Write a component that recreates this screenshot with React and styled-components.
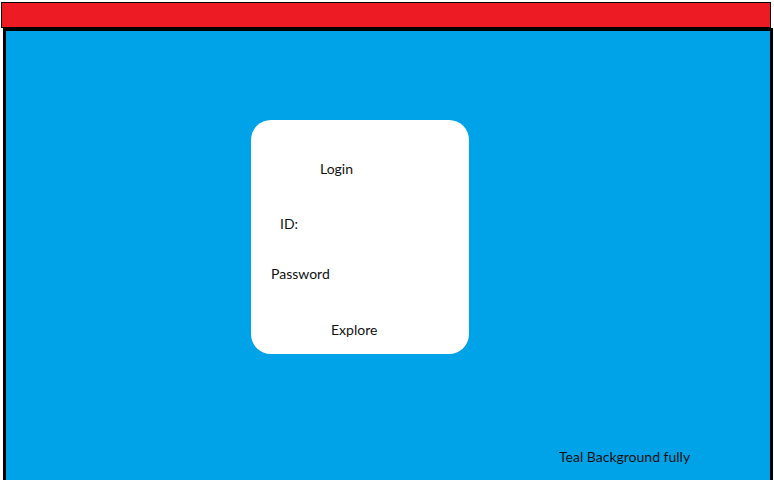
import React from "react";
import styled, { createGlobalStyle } from "styled-components";

const GlobalStyle = createGlobalStyle`
  html, body {
    margin: 0;
    padding: 0;
    background: #ffffff;
    overflow: hidden;
  }
  body {
    font-family: Lato, "Open Sans", sans-serif;
  }
`;

const Page = styled.div`
  width: 774px;
  height: 480px;
  padding-top: 2px;
  box-sizing: border-box;
`;

const TopBar = styled.header`
  width: 770px;
  height: 26px;
  margin-left: 1px;
  box-sizing: border-box;
  border: 1px solid #000;
  background: #ed1c24;
`;

const Main = styled.main`
  width: 770px;
  height: 470px;
  margin-left: 3px;
  box-sizing: border-box;
  border: 3px solid #000;
  border-bottom: none;
  background: #00a2e8;
  display: flex;
  flex-direction: column;
`;

const Card = styled.section`
  width: 218px;
  height: 234px;
  margin: 89px 0 0 245px;
  box-sizing: border-box;
  padding-top: 39px;
  background: #ffffff;
  border-radius: 20px;
  display: flex;
  flex-direction: column;
`;

const Label = styled.div`
  font-size: 14px;
  line-height: 20px;
  color: #111;
  margin-top: ${(p) => p.$top || 0}px;
  padding-left: ${(p) => p.$left || 0}px;
`;

const Note = styled.div`
  font-size: 14px;
  line-height: 20px;
  color: #111;
  margin: 93px 0 0 553px;
`;

export default function App() {
  return (
    <>
      <GlobalStyle />
      <Page>
        <TopBar />
        <Main>
          <Card>
            <Label $left={69}>Login</Label>
            <Label $top={35} $left={29}>ID:</Label>
            <Label $top={30} $left={20}>Password</Label>
            <Label $top={36} $left={80}>Explore</Label>
          </Card>
          <Note>Teal Background fully</Note>
        </Main>
      </Page>
    </>
  );
}
